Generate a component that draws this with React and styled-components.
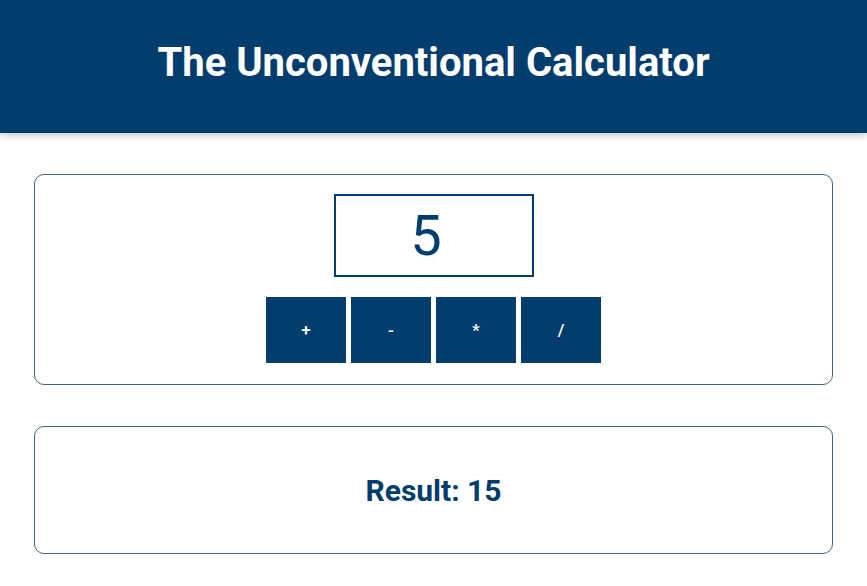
import styled, { createGlobalStyle } from "styled-components"

const GlobalStyle = createGlobalStyle`
  * { box-sizing: border-box; }
  body {
    margin: 0;
    font-family: Roboto, "Liberation Sans", sans-serif;
    background: #ffffff;
  }
`;

const Header = styled.header`
  height: 133px;
  background-color: #023d6d;
  display: flex;
  align-items: center;
  justify-content: center;
  box-shadow: 0 2px 8px rgba(0, 0, 0, 0.26);
`;

const Title = styled.h1`
  margin: 0;
  margin-top: -8px;
  color: #ffffff;
  font-size: 40px;
  font-weight: 700;
`;

const Card = styled.section`
  margin: 41px 34px 0;
  border: 1px solid #3d6489;
  border-radius: 10px;
  padding: ${(p) => p.$pad || "19px 20px 21px"};
  display: flex;
  flex-direction: column;
  align-items: center;
  gap: 20px;
`;

const NumberInput = styled.input`
  width: 200px;
  height: 83px;
  border: 2px solid #023d6d;
  text-align: center;
  font-family: Roboto, "Liberation Sans", sans-serif;
  font-size: 56px;
  color: #023d6d;
  outline: none;
`;

const ButtonRow = styled.div`
  display: flex;
  gap: 5px;
`;

const OpButton = styled.button`
  width: 80px;
  height: 66px;
  border: none;
  background-color: #023d6d;
  color: #ffffff;
  font-family: Roboto, "Liberation Sans", sans-serif;
  font-size: 17px;
  font-weight: 500;
  cursor: pointer;
`;

const Result = styled.h2`
  margin: 0;
  color: #023d6d;
  font-size: 30px;
  font-weight: 700;
  line-height: 35px;
`;

const App = () => {
  const ops = ["+", "-", "*", "/"]

  return (
    <>
      <GlobalStyle />
      <Header>
        <Title>The Unconventional Calculator</Title>
      </Header>
      <Card>
        <NumberInput type="number" defaultValue={5} />
        <ButtonRow>
          {ops.map((op) => (
            <OpButton key={op}>{op}</OpButton>
          ))}
        </ButtonRow>
      </Card>
      <Card $pad="46px 20px 45px">
        <Result>Result: 15</Result>
      </Card>
    </>
  )
}

export default App
